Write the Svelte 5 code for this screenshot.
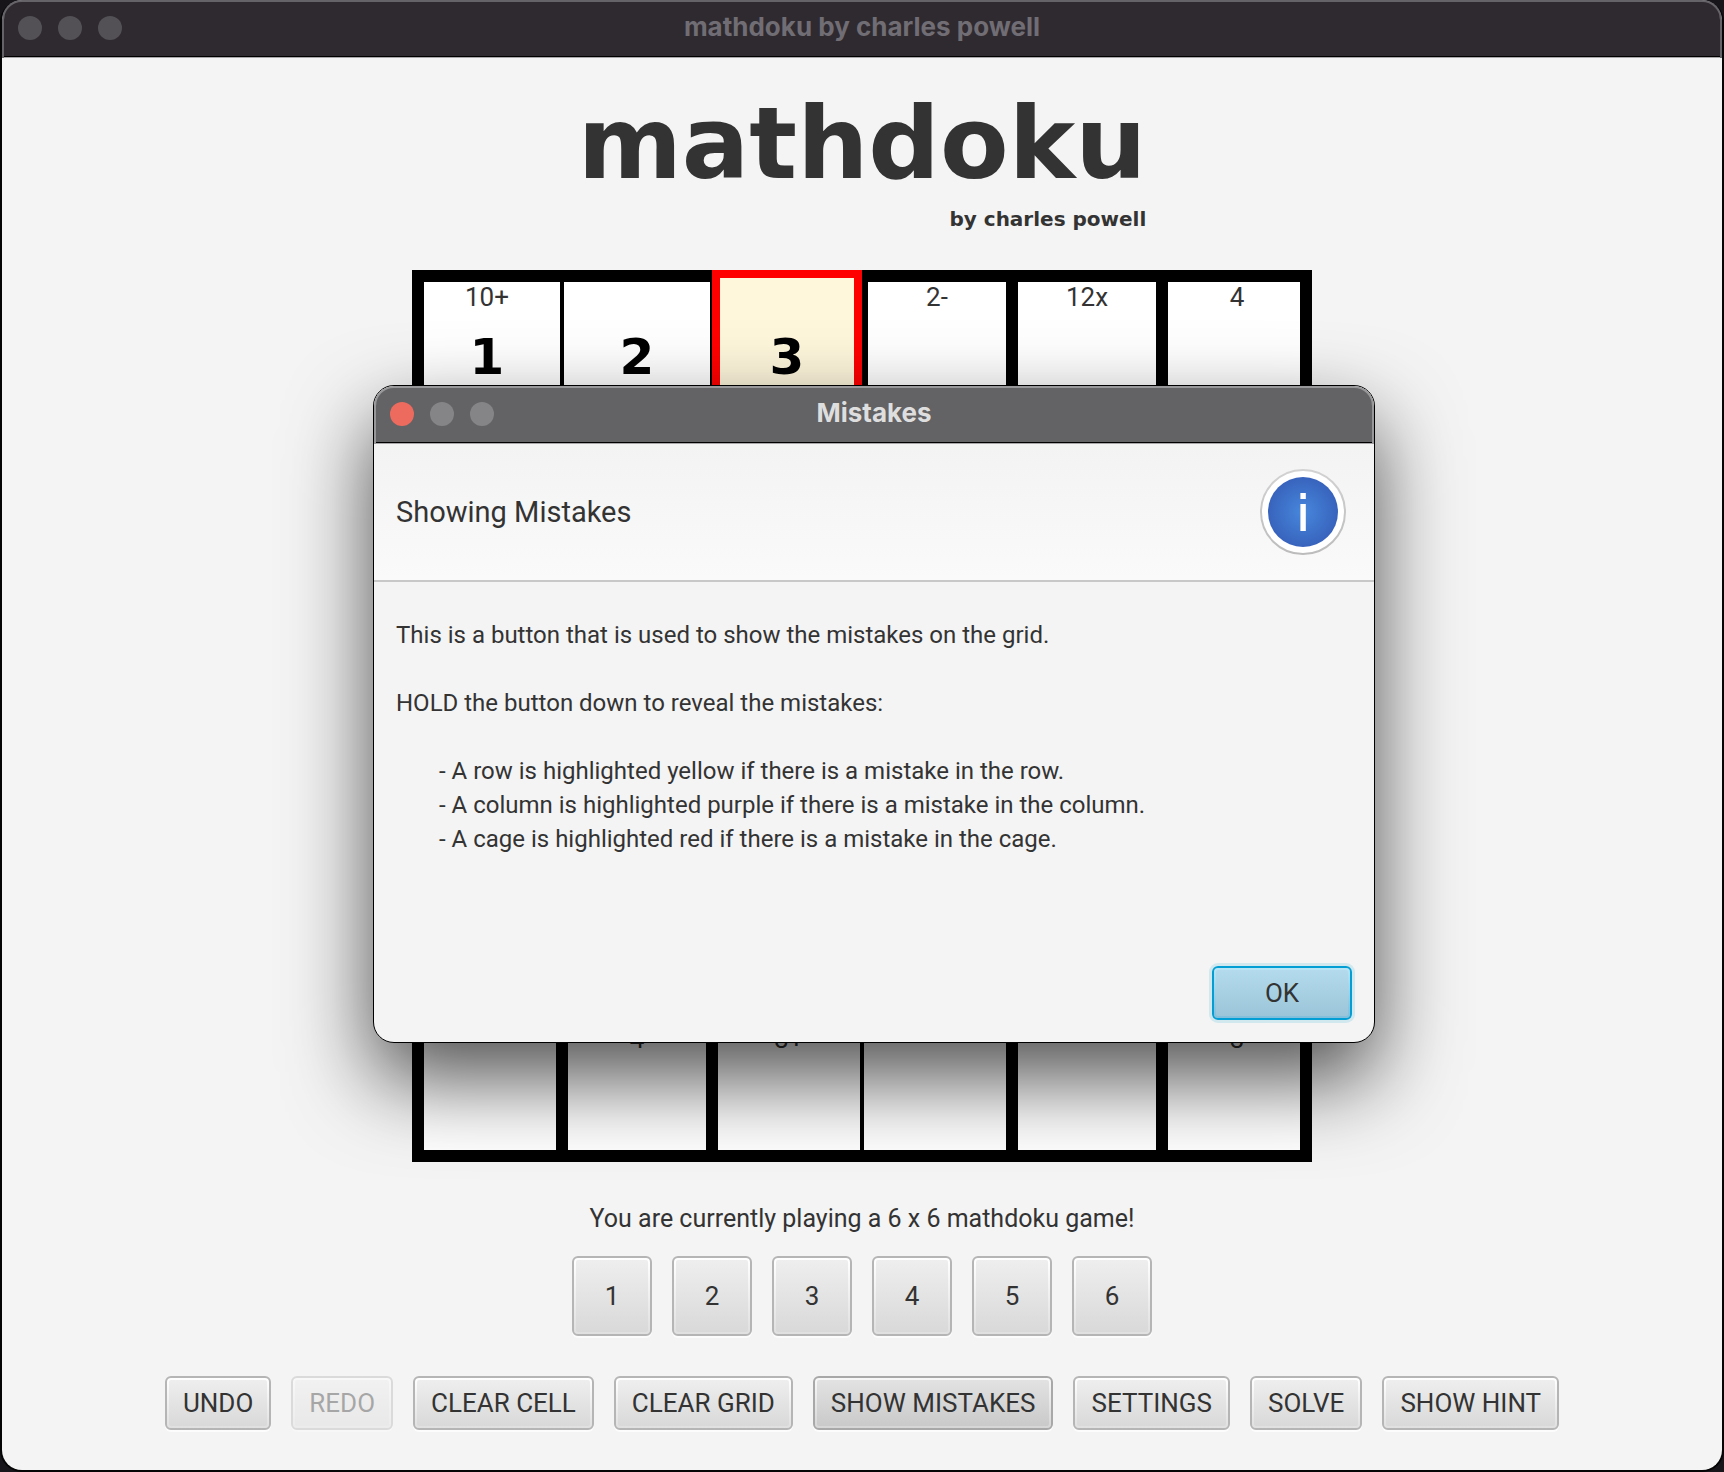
<script>
  // Each cell: cage label, entered value, and the cage edges that are drawn thick.
  const firstRow = [
    { label: '10+', value: '1', edges: 'top left' },
    { label: '', value: '2', edges: 'top' },
    { label: '', value: '3', edges: 'selected' },
    { label: '2-', value: '', edges: 'top wide-left wide-right' },
    { label: '12x', value: '', edges: 'top wide-left wide-right' },
    { label: '4', value: '', edges: 'top wide-left right' }
  ];
  const middleRow = [
    { label: '', value: '', edges: 'left wide-right' },
    { label: '', value: '', edges: 'wide-left wide-right' },
    { label: '', value: '', edges: 'wide-left' },
    { label: '', value: '', edges: 'wide-right' },
    { label: '', value: '', edges: 'wide-left wide-right' },
    { label: '', value: '', edges: 'wide-left right' }
  ];
  const lastRow = [
    { label: '', value: '', edges: 'wide-top bottom left wide-right' },
    { label: '4', value: '', edges: 'wide-top bottom wide-left wide-right' },
    { label: '3+', value: '', edges: 'wide-top bottom wide-left' },
    { label: '', value: '', edges: 'wide-top bottom wide-right' },
    { label: '', value: '', edges: 'wide-top bottom wide-left wide-right' },
    { label: '3', value: '', edges: 'wide-top bottom wide-left right' }
  ];
  const cells = [...firstRow, ...middleRow, ...middleRow, ...middleRow, ...middleRow, ...lastRow];

  const digits = [1, 2, 3, 4, 5, 6];

  const actions = [
    { name: 'UNDO' },
    { name: 'REDO', disabled: true },
    { name: 'CLEAR CELL' },
    { name: 'CLEAR GRID' },
    { name: 'SHOW MISTAKES', pressed: true },
    { name: 'SETTINGS' },
    { name: 'SOLVE' },
    { name: 'SHOW HINT' }
  ];

  const rules = [
    '- A row is highlighted yellow if there is a mistake in the row.',
    '- A column is highlighted purple if there is a mistake in the column.',
    '- A cage is highlighted red if there is a mistake in the cage.'
  ];
</script>

<div class="window">
  <header class="titlebar">
    <div class="lights"><i></i><i></i><i></i></div>
    <span class="caption">mathdoku by charles powell</span>
    <div></div>
  </header>

  <main>
    <div class="brand">
      <h1>mathdoku</h1>
      <p>by charles powell</p>
    </div>

    <div class="board">
      {#each cells as cell}
        <div class="cell {cell.edges}">
          <span class="cage">{cell.label}</span>
          <span class="value">{cell.value}</span>
        </div>
      {/each}
    </div>

    <p class="status">You are currently playing a 6 x 6 mathdoku game!</p>

    <div class="row digits">
      {#each digits as digit}
        <button class="btn digit"><span>{digit}</span></button>
      {/each}
    </div>

    <div class="row">
      {#each actions as action}
        <button class="btn" class:pressed={action.pressed} disabled={action.disabled}><span>{action.name}</span></button>
      {/each}
    </div>
  </main>

  <div class="dialog" role="dialog" aria-labelledby="dialog-title">
    <header class="titlebar">
      <div class="lights"><i class="close"></i><i></i><i></i></div>
      <span class="caption" id="dialog-title">Mistakes</span>
      <div></div>
    </header>
    <div class="heading">
      <h2>Showing Mistakes</h2>
      <svg width="86" height="86" viewBox="0 0 86 86" aria-hidden="true">
        <defs>
          <radialGradient id="info-fill">
            <stop offset="0" stop-color="#4788dc" />
            <stop offset="1" stop-color="#3863bd" />
          </radialGradient>
          <linearGradient id="info-ring" x1="0" y1="0" x2="0" y2="1">
            <stop offset="0" stop-color="#d2d2d2" />
            <stop offset="1" stop-color="#bcbcbc" />
          </linearGradient>
        </defs>
        <circle cx="43" cy="43" r="42" fill="#fff" stroke="url(#info-ring)" stroke-width="2" />
        <circle cx="43" cy="43" r="35" fill="url(#info-fill)" />
        <rect x="40.4" y="24" width="5.4" height="6" fill="#fff" />
        <rect x="40.4" y="35" width="5.4" height="27" fill="#fff" />
      </svg>
    </div>
    <div class="message">
      <p>This is a button that is used to show the mistakes on the grid.</p>
      <p>HOLD the button down to reveal the mistakes:</p>
      <ul>
        {#each rules as rule}
          <li>{rule}</li>
        {/each}
      </ul>
    </div>
    <div class="buttons">
      <button class="btn ok"><span>OK</span></button>
    </div>
  </div>
</div>

<style>
  :global(body) {
    background: #17151a;
  }
  h1, h2, p, ul {
    margin: 0;
    padding: 0;
    font-weight: 400;
  }
  .window {
    box-sizing: border-box;
    position: relative;
    display: flex;
    flex-direction: column;
    min-height: 100vh;
    border: 2px solid #050506;
    border-top: 0;
    border-radius: 22px;
    background: #f4f4f4;
    color: #333;
    font: 26px/34px Roboto, "Liberation Sans", sans-serif;
  }
  .titlebar {
    box-sizing: border-box;
    display: grid;
    grid-template-columns: 1fr auto 1fr;
    align-items: center;
    height: 58px;
    padding: 0 14px;
    border: 2px solid #656268;
    border-bottom: 0;
    border-radius: 20px 20px 0 0;
    background: #2f2a30;
    box-shadow: inset 0 -1px #a9a7aa, inset 0 -2px #000;
    color: #716d74;
  }
  .caption {
    padding-bottom: 6px;
    font-family: Inter, "Liberation Sans", sans-serif;
    font-size: 26px;
    font-weight: 700;
    line-height: 32px;
  }
  .lights {
    display: flex;
    gap: 16px;
    padding-bottom: 4px;
  }
  .lights i {
    width: 24px;
    height: 24px;
    border-radius: 50%;
    background: #535056;
  }
  main {
    display: flex;
    flex-direction: column;
    align-items: center;
    padding: 26px 20px 40px;
  }
  .brand {
    display: flex;
    flex-direction: column;
    align-items: flex-end;
    font-family: "DejaVu Sans", sans-serif;
    margin-bottom: 36px;
  }
  h1 {
    font-size: 100px;
    font-weight: 700;
    line-height: 120px;
  }
  .brand p {
    font-size: 20px;
    font-weight: 700;
    line-height: 30px;
  }
  .board {
    display: grid;
    grid-template-columns: repeat(6, 150px);
    grid-template-rows: 148px repeat(4, 150px) 144px;
  }
  .cell {
    display: flex;
    flex-direction: column;
    align-items: center;
    border: 2px solid #000;
    background: #fff;
  }
  .cell.wide-top { border-top-width: 6px; }
  .cell.wide-left { border-left-width: 6px; }
  .cell.wide-right { border-right-width: 6px; }
  .cell.top { border-top-width: 12px; }
  .cell.left {
    padding-right: 10px;
    border-left-width: 12px;
  }
  .cell.right {
    padding-left: 6px;
    border-right-width: 12px;
  }
  .cell.bottom { border-bottom-width: 12px; }
  .cell.selected {
    padding-top: 4px;
    border: 8px solid #f00;
    background: #fff7dc;
  }
  .cage {
    height: 30px;
    line-height: 30px;
  }
  .value {
    padding-top: 15px;
    color: #000;
    font: 700 50px/60px "DejaVu Sans", sans-serif;
  }
  .status {
    margin: 40px 0 20px;
    font-size: 25px;
  }
  .row {
    display: flex;
    flex-wrap: wrap;
    justify-content: center;
    gap: 20px;
  }
  .digits {
    margin-bottom: 40px;
  }
  .btn {
    display: flex;
    height: 54px;
    padding: 2px;
    border: 2px solid #b5b5b5;
    border-radius: 6px;
    background:
      linear-gradient(#eee, #d9d9d9) content-box,
      linear-gradient(#fff, #e0e0e0) padding-box;
    box-shadow: 0 2px #fcfcfc;
    color: #333;
    font: inherit;
  }
  .btn span {
    flex: 1;
    align-self: center;
    padding: 0 14px;
    text-align: center;
  }
  .btn:disabled {
    opacity: 0.4;
  }
  .pressed {
    border-color: #a8a8a8;
    background:
      linear-gradient(#e2e2e2, #cacaca) content-box,
      linear-gradient(#f8f8f8, #d6d6d6) padding-box;
  }
  .digit {
    width: 80px;
    height: 80px;
  }
  .dialog {
    position: absolute;
    top: 385px;
    left: calc(50% - 489px);
    box-sizing: border-box;
    width: 1002px;
    max-width: 100%;
    border: 1px solid #000;
    border-radius: 21px;
    background: #f4f4f4;
    box-shadow: 0 36px 84px rgba(0, 0, 0, 0.69);
  }
  .dialog .titlebar {
    border-color: #98989a;
    background: #636365;
    color: #dededf;
  }
  .dialog .lights i {
    background: #858587;
  }
  .dialog .lights .close {
    background: #ed6a5e;
  }
  .heading {
    display: flex;
    align-items: center;
    justify-content: space-between;
    padding: 25px 28px 25px 22px;
    border-bottom: 2px solid #c8c8c8;
    background: linear-gradient(#f3f3f3, #fafafa);
  }
  h2 {
    font-size: 29px;
    line-height: 36px;
  }
  .message {
    display: flex;
    flex-direction: column;
    gap: 34px;
    padding: 36px 22px 110px;
    font-size: 24px;
  }
  ul {
    padding-left: 43px;
    list-style: none;
  }
  .buttons {
    display: flex;
    justify-content: flex-end;
    padding: 0 22px 22px;
  }
  .ok {
    width: 140px;
    border-color: #039ed3;
    background:
      linear-gradient(#b3dbed, #9dc5d9) content-box,
      linear-gradient(#b9e6f7, #82bedb) padding-box;
    box-shadow: 0 0 0 3px #d2e8ef;
  }
</style>
